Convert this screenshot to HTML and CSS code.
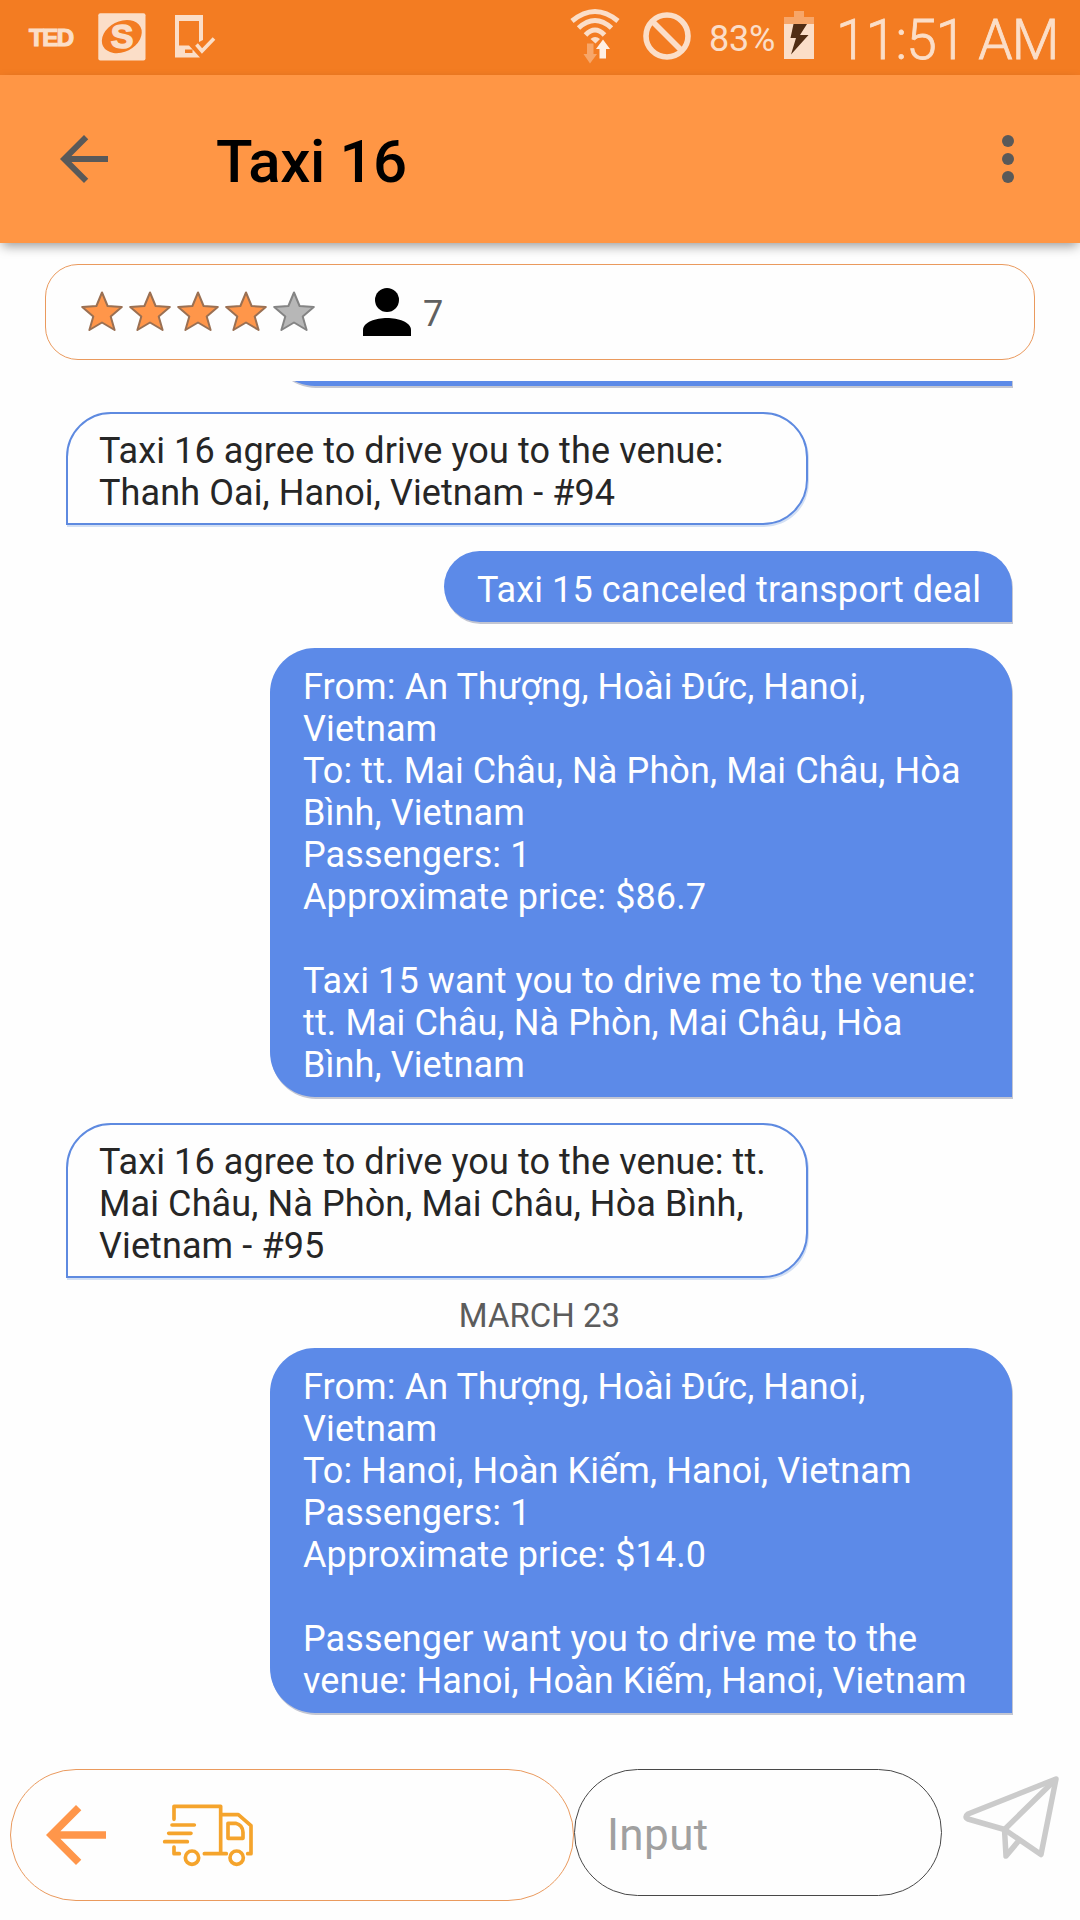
FILE: index.html
```html
<!DOCTYPE html>
<html lang="en">
<head>
<meta charset="utf-8">
<title>Taxi 16</title>
<link rel="stylesheet" href="styles.css">
</head>
<body>
<div class="screen">
  <div class="status-bar">
    <span class="ted">TED</span>
    <svg class="icon-s" width="48" height="48" viewBox="0 0 48 48"><rect x=".3" y=".3" width="47.2" height="47.2" rx="2" fill="#fbdec8"/><ellipse cx="23.8" cy="23.6" rx="21" ry="15.2" transform="rotate(-27 23.8 23.6)" fill="#f37c22"/><text x="24" y="35" text-anchor="middle" class="s-letter">S</text></svg>
    <svg class="icon-phone" width="42" height="44" viewBox="0 0 42 44"><path fill="#fbdec8" fill-rule="evenodd" d="M1 1H29V26L25 28V7H5V31.500H15L26 43.500H1ZM11 35.500V39H18.500V35.500Z"/><path d="M22.500 30.500L28 37L40 24.500" fill="none" stroke="#fbdec8" stroke-width="3.600"/></svg>
    <span class="spacer"></span>
    <svg class="icon-wifi" width="50" height="56" viewBox="0 0 50 56"><g fill="none" stroke="#fbdec8" stroke-width="5"><path d="M2 13Q25-6 48 13"/><path d="M8.500 20Q25 5 41.500 20"/><path d="M15.500 27Q25 17 34.500 27"/></g><path fill="#fbdec8" d="M20.500 31Q25 27 30 31L25.500 35.500Z"/><path fill="#f7a669" d="M17 35.500H23.500V46H27L20 55.500L13.500 46H17Z"/><path fill="#fff0e4" d="M33 31.500L40 41H36V50.500H29.500V41H26Z"/></svg>
    <svg class="icon-block" width="48" height="48" viewBox="0 0 48 48"><g fill="none" stroke="#fbdec8" stroke-width="5.600"><circle cx="24" cy="24" r="21"/><path d="M9 9L39 39"/></g></svg>
    <span class="percent">83%</span>
    <svg class="icon-battery" width="30" height="48" viewBox="0 0 30 48"><path fill="#f7a669" d="M10 0H20V6H30V13H0V6H10Z"/><path fill="#fbdec8" d="M0 13H30V48H0Z"/><path fill="#512d14" d="M9.500 13H23L16 24H24.500L7 43.500L12 27H6.500Z"/></svg>
    <span class="time">11:51 AM</span>
  </div>
  <header class="app-bar">
    <svg class="back" width="72" height="72" viewBox="0 0 24 24"><path fill="#595959" d="M20 11H7.830l5.590-5.590L12 4l-8 8 8 8 1.410-1.410L7.830 13H20z"/></svg>
    <h1>Taxi 16</h1>
    <svg class="more" width="12" height="48" viewBox="0 0 12 48" fill="#595959"><circle cx="6" cy="6" r="6"/><circle cx="6" cy="24" r="6"/><circle cx="6" cy="42" r="6"/></svg>
  </header>
  <section class="info-card">
    <svg class="stars" width="240" height="48" viewBox="0 0 240 48">
      <defs><path id="star" stroke-width="2" stroke-linejoin="round" d="M24 4.500L29.600 18L43.800 19L32.700 28.500L36.600 42L24 34.500L11.400 42L15.300 28.500L4.200 19L18.400 18Z"/></defs>
      <g fill="#ff964a" stroke="#9a7053"><use href="#star"/><use href="#star" x="48"/><use href="#star" x="96"/><use href="#star" x="144"/></g>
      <use href="#star" x="192" fill="#b7b7b7" stroke="#848484"/>
    </svg>
    <svg class="person" width="48" height="48" viewBox="0 0 48 48"><circle cx="24" cy="12" r="12"/><path d="M0 48V42C0 34 13 30 24 30S48 34 48 42V48Z"/></svg>
    <span class="count">7</span>
  </section>
  <main class="messages">
    <div class="bubble sent wide"><br><br></div>
    <div class="bubble received">Taxi 16 agree to drive you to the venue:<br>Thanh Oai, Hanoi, Vietnam - #94</div>
    <div class="bubble sent">Taxi 15 canceled transport deal</div>
    <div class="bubble sent wide">From: An Thượng, Hoài Đức, Hanoi,<br>Vietnam<br>To: tt. Mai Châu, Nà Phòn, Mai Châu, Hòa<br>Bình, Vietnam<br>Passengers: 1<br>Approximate price: $86.7<br><br>Taxi 15 want you to drive me to the venue:<br>tt. Mai Châu, Nà Phòn, Mai Châu, Hòa<br>Bình, Vietnam</div>
    <div class="bubble received">Taxi 16 agree to drive you to the venue: tt.<br>Mai Châu, Nà Phòn, Mai Châu, Hòa Bình,<br>Vietnam - #95</div>
    <div class="date">MARCH 23</div>
    <div class="bubble sent wide">From: An Thượng, Hoài Đức, Hanoi,<br>Vietnam<br>To: Hanoi, Hoàn Kiếm, Hanoi, Vietnam<br>Passengers: 1<br>Approximate price: $14.0<br><br>Passenger want you to drive me to the<br>venue: Hanoi, Hoàn Kiếm, Hanoi, Vietnam</div>
  </main>
  <footer class="composer">
    <div class="actions">
      <svg class="act-back" width="90" height="90" viewBox="0 0 24 24"><path fill="#ff964a" d="M20 11H7.830l5.590-5.590L12 4l-8 8 8 8 1.410-1.410L7.830 13H20z"/></svg>
      <svg class="truck" width="92" height="64" viewBox="486 188 276 192" fill="none" stroke="#f5a42c" stroke-width="11" stroke-linecap="round" stroke-linejoin="round"><path d="M522 237V198H662V339M516 254H583M506 279H573M494 304H562M522 320V340H538M613 340H679M664 223H715L753 256V340H743"/><path d="M684 249H707Q728 254 729 276V294H684Z"/><circle cx="576" cy="352" r="20"/><circle cx="710" cy="352" r="20"/></svg>
    </div>
    <div class="input">Input</div>
    <svg class="send" width="98" height="88" viewBox="962 1774 98 88" fill="none" stroke="#cbcbcb" stroke-width="5.500" stroke-linejoin="round"><path d="M1056 1779L968 1814Q964 1817 968 1819L1004.500 1829.500L1041 1854.500Z"/><path d="M1056 1779L1004.500 1829.500L1006 1856L1018.500 1841"/></svg>
  </footer>
</div>
</body>
</html>
```
FILE: styles.css
```css
* { box-sizing: border-box; }
body { margin: 0; background: #fefefe; font-family: Roboto, "Noto Sans", sans-serif; }
svg { display: block; flex: none; }
.screen { width: 1080px; height: 1920px; display: flex; flex-direction: column; overflow: hidden; }

.status-bar { height: 75px; flex: none; background: #f37c22; color: #fbdec8; display: flex; align-items: flex-start; padding: 0 22px 0 29px; white-space: nowrap; }
.ted { width: 69px; font: bold 24px/24px "Liberation Sans", sans-serif; letter-spacing: -1.4px; -webkit-text-stroke: 1.2px #fbdec8; margin-top: 26px; }
.icon-s { margin-top: 13px; }
.s-letter { font: bold 34px "Liberation Sans", sans-serif; fill: #fbdec8; stroke: #fbdec8; stroke-width: 1.5px; }
.icon-phone { margin: 14px 0 0 28px; }
.spacer { flex: 1; }
.icon-wifi { margin: 8px 23px 0 0; }
.icon-block { margin: 12px 18px 0 0; }
.percent { width: 66px; font-size: 36px; line-height: 42px; letter-spacing: -.2px; margin-top: 18px; }
.icon-battery { margin: 11px 22px 0 9px; }
.time { width: 222px; font-size: 55px; font-weight: 300; line-height: 64px; letter-spacing: -.8px; -webkit-text-stroke: .8px #fbdec8; margin-top: 8px; }

.app-bar { height: 168px; flex: none; background: #ff9645; display: flex; align-items: center; padding: 0 66px 0 48px; box-shadow: 0 5px 11px -2px rgba(0, 0, 0, .4); z-index: 1; }
.app-bar h1 { flex: 1; margin: 0 0 0 96px; padding-top: 5px; font-size: 60px; font-weight: 500; line-height: 70px; letter-spacing: -.4px; color: #000; }

.info-card { height: 96px; flex: none; margin: 21px 45px 0; border: 1px solid #ea9a5e; border-radius: 33px; display: flex; align-items: center; padding-left: 32px; }
.person { margin-left: 45px; }
.count { margin-left: 12px; padding-top: 3px; font-size: 36px; line-height: 42px; color: #606060; }

.messages { flex: 1; min-height: 0; margin-top: 21px; padding: 0 68px 56px 66px; overflow: hidden; display: flex; flex-direction: column; justify-content: flex-end; gap: 26px; }
.bubble { flex: none; font-size: 36px; line-height: 42px; letter-spacing: .1px; white-space: nowrap; padding: 18px 31px 11px 33px; border-radius: 45px; }
.sent { align-self: flex-end; background: #5c8ae8; color: #fff; border-bottom-right-radius: 0; box-shadow: 1px 2px 0 #c3c6d2; }
.wide, .received { width: 742px; }
.received { align-self: flex-start; padding: 16px 31px 9px; border: 2px solid #5e8ae0; border-bottom-left-radius: 0; color: #262626; box-shadow: 1px 2px 0 #d3e0f4; }
.date { flex: none; height: 18px; padding: 4px 0 0 1px; display: flex; align-items: center; justify-content: center; font-size: 33px; line-height: 39px; color: #5c5c5c; }

.composer { height: 151px; flex: none; display: flex; align-items: flex-start; padding-left: 10px; }
.actions { width: 564px; height: 132px; border: 1px solid #ea9a5e; border-radius: 66px; display: flex; align-items: center; padding-left: 20px; }
.truck { margin-left: 41px; }
.input { width: 368px; height: 127px; border: 1px solid #484848; border-radius: 64px; display: flex; align-items: center; padding: 4px 0 0 32px; font-size: 44px; letter-spacing: .4px; color: #a0a0a0; }
.send { margin: 5px 0 0 20px; }
```
